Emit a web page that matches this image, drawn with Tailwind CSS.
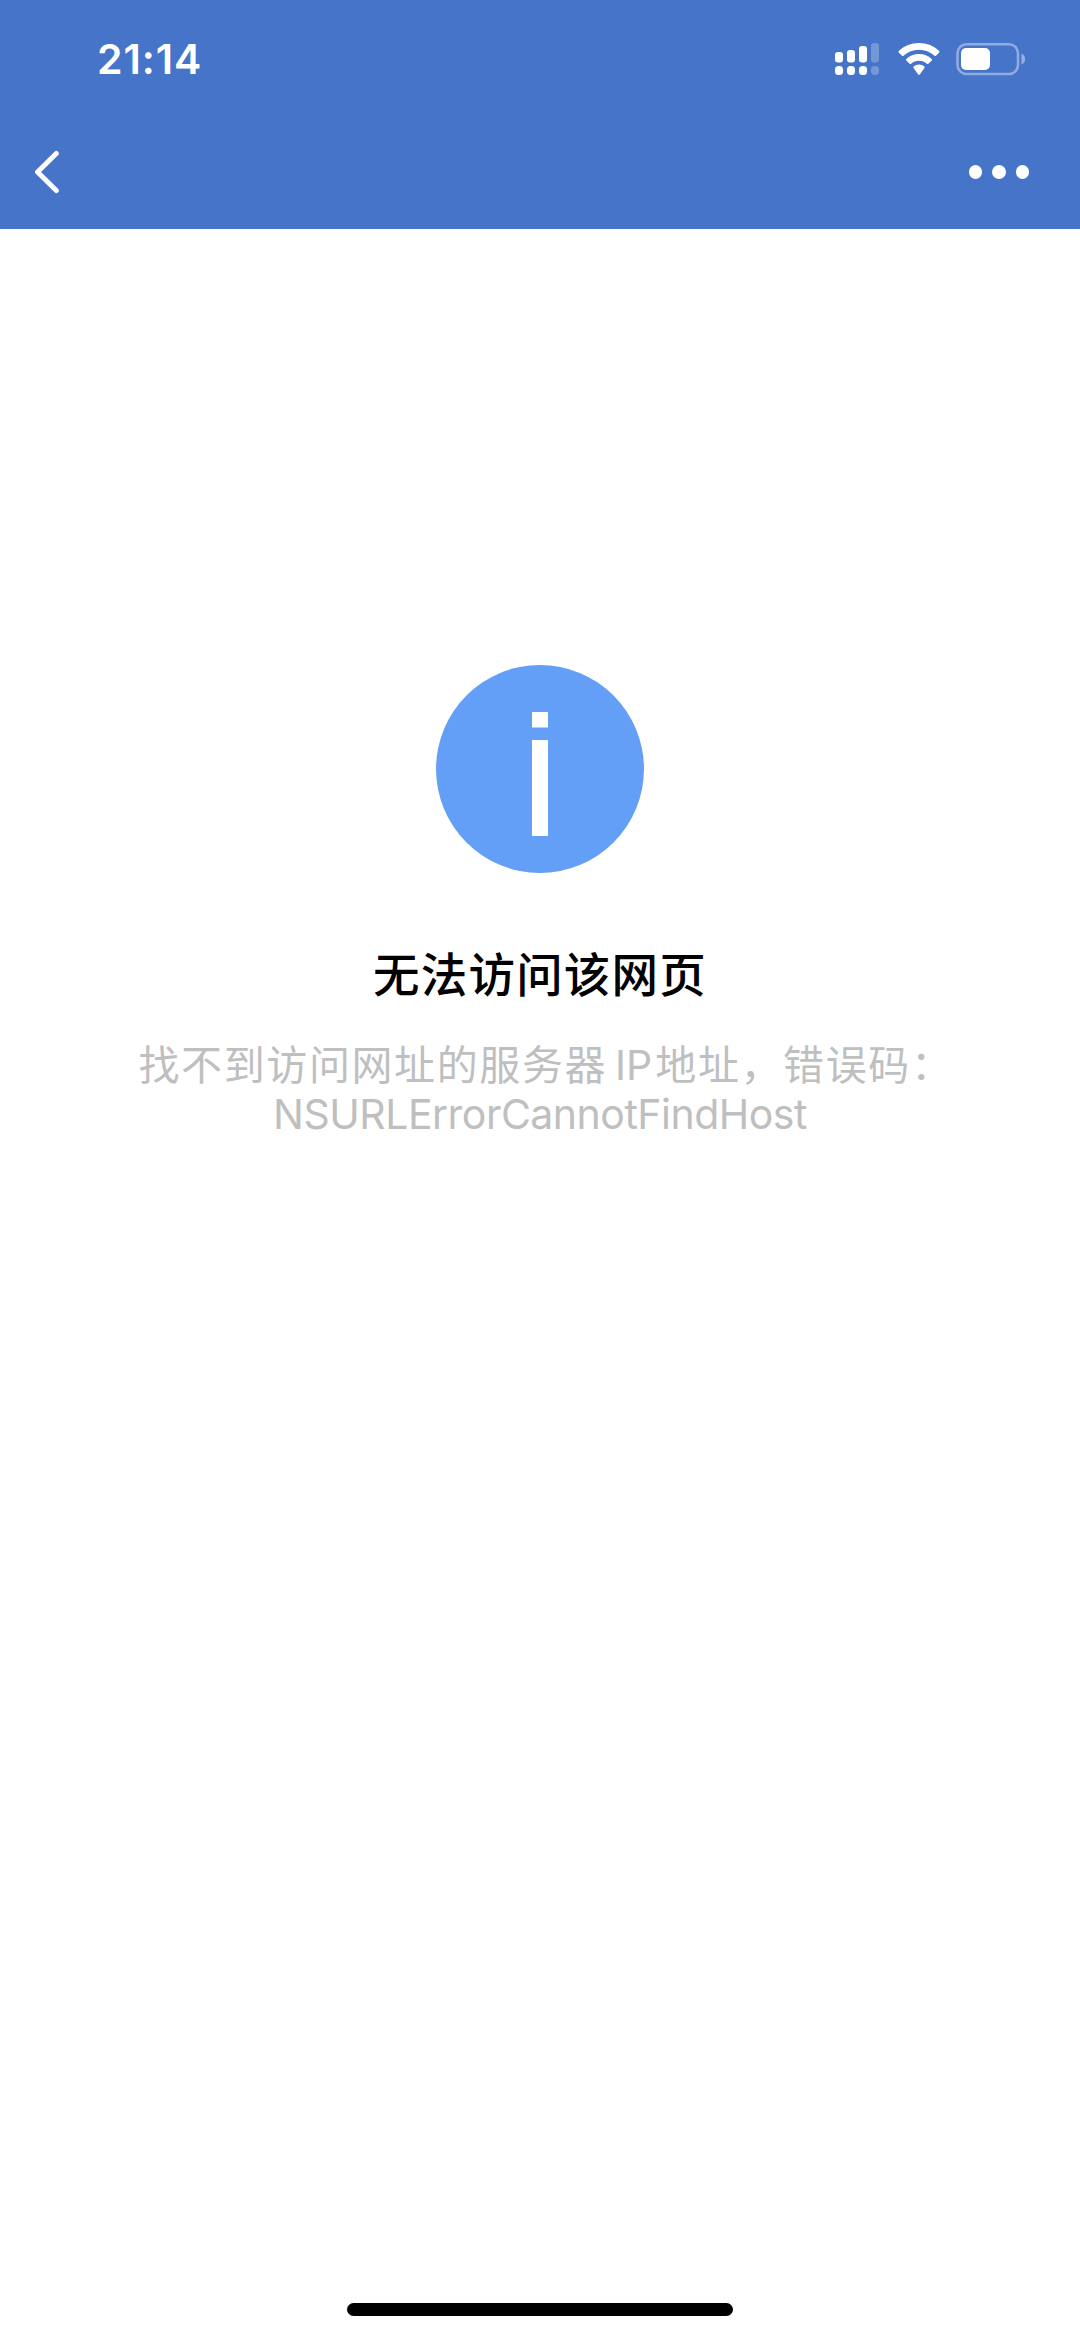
<!DOCTYPE html>
<html lang="zh-CN">
  <head>
    <meta charset="UTF-8" />
    <meta name="viewport" content="width=device-width, initial-scale=1.0" />
    <title>无法访问该网页</title>
    <script src="https://cdn.jsdelivr.net/npm/@tailwindcss/browser@4"></script>
  </head>
  <body
    class="flex flex-col h-[2337px] bg-white font-['Inter','Noto_Sans_CJK_SC',sans-serif]"
  >
    <header class="h-[229px] bg-[#4674c9] text-white">
      <!-- status bar -->
      <div class="flex items-center justify-between h-[118px] pl-[97px] pr-[55px]">
        <p class="text-[41px] leading-none font-semibold tracking-[.9px]">21:14</p>
        <div class="flex items-center">
          <svg class="w-[45px] h-9" viewBox="0 0 45 36" fill="currentColor">
            <rect x="0" y="11" width="8" height="10.5" rx="3" />
            <rect x="12" y="9" width="8" height="12.5" rx="3" />
            <rect x="24" y="5" width="8" height="16.5" rx="3" />
            <rect x="36" y="2" width="8" height="19.5" rx="3" opacity=".25" />
            <rect x="0" y="25" width="8" height="9" rx="3.5" />
            <rect x="12" y="25" width="8" height="9" rx="3.5" />
            <rect x="24" y="25" width="8" height="9" rx="3.5" />
            <rect x="36" y="25" width="8" height="9" rx="3.5" opacity=".25" />
          </svg>
          <svg
            class="ml-[18px] w-[42px] h-9"
            viewBox="0 0 42 36"
            fill="currentColor"
          >
            <path
              d="M21 2C13.2 2 6.100 5 .8 9.900Q0 10.700 .8 11.500L4 14.700Q4.700 15.400 5.500 14.700C9.700 10.900 15.100 8.700 21 8.700S32.300 10.900 36.500 14.700Q37.300 15.400 38 14.700L41.200 11.500Q42 10.700 41.200 9.900C35.900 5 28.800 2 21 2Z"
            />
            <path
              d="M21 13C16.100 13 11.700 14.900 8.300 17.900Q7.500 18.700 8.300 19.500L11.600 22.700Q12.300 23.400 13.100 22.700C15.200 20.800 18 19.700 21 19.700S26.800 20.800 28.900 22.700Q29.700 23.400 30.400 22.700L33.700 19.500Q34.500 18.700 33.700 17.900C30.300 14.900 25.900 13 21 13Z"
            />
            <path
              d="M21 23.500C18.900 23.500 17 24.300 15.600 25.500Q14.800 26.300 15.600 27.100L20.200 33.600Q21 34.500 21.800 33.600L26.400 27.100Q27.200 26.300 26.400 25.500C25 24.300 23.100 23.500 21 23.500Z"
            />
          </svg>
          <svg class="ml-4 w-[69px] h-9" viewBox="0 0 69 36" fill="currentColor">
            <rect
              x="1.500"
              y="3.200"
              width="60.500"
              height="29.800"
              rx="9"
              fill="none"
              stroke="currentColor"
              stroke-width="2.600"
              opacity=".4"
            />
            <rect x="5" y="7" width="29" height="22" rx="5" />
            <path d="M65.500 12.500Q69 14 69 18T65.500 23.500Z" opacity=".45" />
          </svg>
        </div>
      </div>
      <!-- nav bar -->
      <div class="flex items-center justify-between h-[108px] pl-[33px] pr-[51px]">
        <svg
          class="w-7 h-11"
          viewBox="0 0 28 44"
          fill="none"
          stroke="currentColor"
          stroke-width="5"
          stroke-linecap="round"
          stroke-linejoin="round"
        >
          <path d="M23.300 3.500 4.500 22 23.300 40.500" />
        </svg>
        <div class="flex gap-[10px]">
          <span class="size-[13.500px] rounded-full bg-white"></span>
          <span class="size-[13.500px] rounded-full bg-white"></span>
          <span class="size-[13.500px] rounded-full bg-white"></span>
        </div>
      </div>
    </header>

    <main class="flex flex-col items-center flex-1 pt-[436px]">
      <svg class="size-[208px]" viewBox="0 0 208 208">
        <circle cx="104" cy="104" r="104" fill="#649ff7" />
        <path d="M96 47h16v15.500H96zM96 75h16v96H96z" fill="#fff" />
      </svg>
      <h1
        class="mt-[63px] text-[46.500px] leading-[72px] tracking-[1.200px] font-medium text-black font-['Noto_Sans_CJK_SC',sans-serif]"
      >
        无法访问该网页
      </h1>
      <div
        class="mt-[33px] flex flex-col items-center text-[41px] leading-[49px] text-[#bfbfbf]"
      >
        <p class="pl-3 whitespace-nowrap tracking-[1.600px]">
          找不到访问网址的服务器<span class="ml-2 mr-[3px] tracking-normal">IP</span>地址，错误码：
        </p>
        <p class="tracking-[-0.500px]">NSURLErrorCannotFindHost</p>
      </div>
    </main>

    <div class="flex justify-center pb-[21px]">
      <div class="w-[386px] h-[13px] rounded-full bg-black"></div>
    </div>
  </body>
</html>
